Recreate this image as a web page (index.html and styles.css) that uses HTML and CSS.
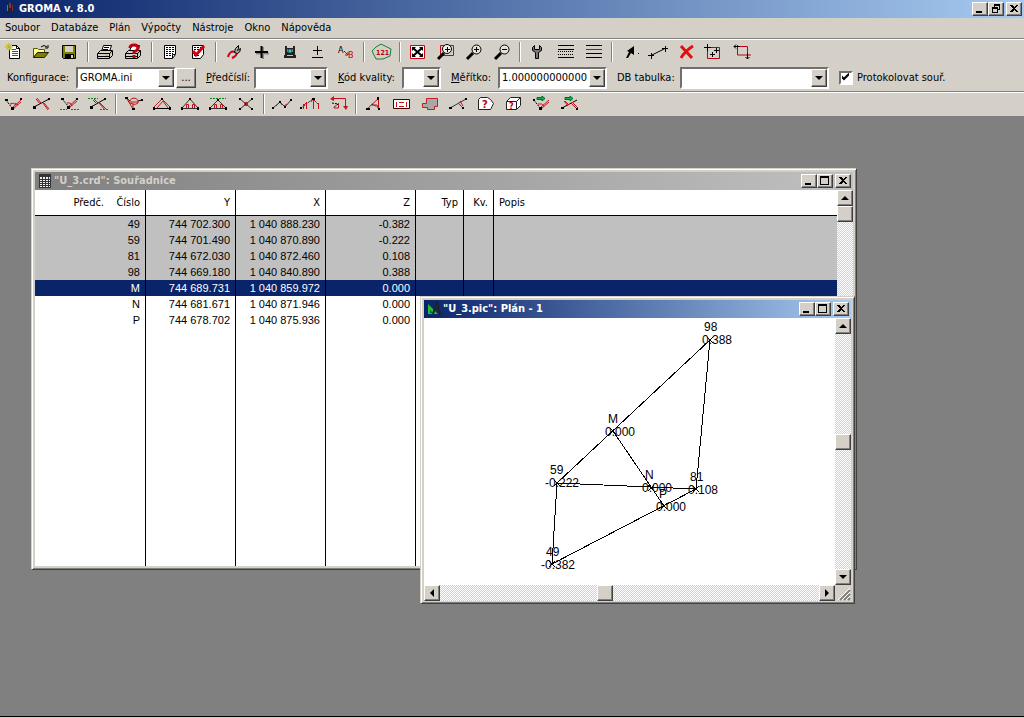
FILE: index.html
```html
<!DOCTYPE html>
<html lang="cs">
  <head>
    <meta charset="utf-8" />
    <meta name="viewport" content="width=device-width, initial-scale=1" />
    <title>GROMA v. 8.0</title>
    <link rel="stylesheet" href="styles.css">
  </head>
  <body>
    <header class="titlebar">
      <svg class="app-icon" viewBox="0 0 16 16"><path d="M5 2v9l2 3V3zM9 3v11l3-4V2z" fill="#222" /><path d="M7 2h2v5H7zM10 4h1v6h-1z" fill="#833" /><path d="M5 4h1v6H5z" fill="#777" /></svg>
      <h1>GROMA v. 8.0</h1>
      <div class="caption">
        <button aria-label="Minimalizovat"><svg viewBox="0 0 12 10"><path d="M2 7h6v2H2z" /></svg></button>
        <button aria-label="Obnovit"><svg viewBox="0 0 12 10"><path d="M4 0h6v6H8V5h1V2H5v1H4zM2 3h6v6H2zM3 5v3h4V5z" fill-rule="evenodd" /></svg></button>
        <button class="close" aria-label="Zavřít"><svg viewBox="0 0 12 10"><path d="M2 1h2l2 2 2-2h2L7 4.500l3 3.500H8L6 6 4 8H2l3-3.500z" /></svg></button>
      </div>
    </header>

    <nav class="menu">
      <button>Soubor</button>
      <button>Databáze</button>
      <button>Plán</button>
      <button>Výpočty</button>
      <button>Nástroje</button>
      <button>Okno</button>
      <button>Nápověda</button>
    </nav>

    <div class="toolbars">
      <div class="toolbar">
        <button aria-label="Nový"><svg viewBox="0 0 20 18"><path d="M5.500 15.500v-9M8 2.500h4.500l3 3v10h-10" fill="#fff" stroke="#000" /><path d="M6 7h9v8H6z" fill="#fff" /><path d="M12.500 2v3.500H16" fill="none" stroke="#000" /><path d="M8 6.500h4M8 8.500h6M8 10.500h6M8 12.500h6" stroke="#555" /><path d="M1 4h8M5 0v8M2 1l6 6M8 1L2 7" stroke="#b8b800" /></svg></button>
        <button aria-label="Otevřít"><svg viewBox="0 0 20 18"><path d="M1.500 14.500v-9h4l1 1h6v3h-7z" fill="#ffff90" stroke="#555500" /><path d="M1.500 14.500l4-5h11l-4 5z" fill="#808000" stroke="#222200" /><path d="M9 4q3-3 6 0M16 2v3h-3" fill="none" stroke="#000" /></svg></button>
        <button aria-label="Uložit"><svg viewBox="0 0 20 18"><path d="M2.500 2.500h13v13h-12l-1-1z" fill="#808000" stroke="#000" /><path d="M5 3h8v6H5z" fill="#d4d0c8" /><path d="M5 11h9v4H5z" /><path d="M11 12h2v3h-2z" fill="#d4d0c8" /></svg></button>
        <span class="sep"></span>
        <button aria-label="Tisk"><svg viewBox="0 0 20 18"><path d="M5.500 8.500l2-6h8l-2 6z" fill="#fff" stroke="#000" /><path d="M8 4.500h5M7 6.500h5" stroke="#000" /><path d="M1.500 10.500l3-3h12v5l-3 3h-12z" fill="#d4d0c8" stroke="#000" /><path d="M2 10.500h12l2-3M13.500 10v5M2 13.500h11" fill="none" stroke="#000" /><path d="M9 12h3" stroke="#bb0" /></svg></button>
        <button aria-label="Náhled tisku"><svg viewBox="0 0 20 18"><path d="M5.500 8.500l2-6h8l-2 6z" fill="#fff" stroke="#000" /><path d="M1.500 10.500l3-3h12v5l-3 3h-12z" fill="#d4d0c8" stroke="#000" /><path d="M2 10.500h12l2-3M13.500 10v5M2 13.500h11" fill="none" stroke="#000" /><path d="M6 5q0-3 4-3 4 0 4 3 0 2-4 4v2M10 12v3" fill="none" stroke="#c00010" stroke-width="3" /></svg></button>
        <span class="sep"></span>
        <button aria-label="Seznam"><svg viewBox="0 0 20 18"><path d="M4.500 2.500h11v9l-3 4h-8z" fill="#fff" stroke="#000" /><path d="M6 4.500h8M6 6.500h8M6 8.500h8M6 10.500h7M6 12.500h5" stroke="#000" stroke-dasharray="2 1" /><path d="M12.500 15v-3.500H15" fill="none" stroke="#000" /></svg></button>
        <button aria-label="Kontrola"><svg viewBox="0 0 20 18"><path d="M4.500 2.500h11v9l-3 4h-8z" fill="#fff" stroke="#000" /><path d="M6 4.500h8M6 6.500h8M6 12.500h5" stroke="#000" stroke-dasharray="2 1" /><path d="M5 8l3 4 8-9" fill="none" stroke="#d00010" stroke-width="3" /></svg></button>
        <span class="sep"></span>
        <button aria-label="Kleště"><svg viewBox="0 0 20 18"><path d="M11 9q-5-2-7 5M13 9q0 4-5 6" fill="none" stroke="#d00010" stroke-width="2" /><path d="M10.500 9.500l1-4 3-3v3l-1 2 3-2q0 4-3 5z" fill="#aaa" stroke="#000" /></svg></button>
        <button aria-label="Bod"><svg viewBox="0 0 20 18"><path d="M11 4v12M4 10.500h13" stroke="#888" stroke-width="2" /><path d="M9.500 3v12M3 9h13" stroke="#000" stroke-width="2" /></svg></button>
        <button aria-label="Přístroj"><svg viewBox="0 0 20 18"><path d="M5 3h2v6h6V3h2v9h1v3H4v-3h1zM7 5h6v1H7z" fill="#222" /><path d="M8 6h4v4H8z" fill="#20d8d8" stroke="#222" /><path d="M7 12h6v1H7z" fill="#b8c8c8" /></svg></button>
        <button aria-label="Plus minus"><svg viewBox="0 0 20 18"><path d="M9.500 3v9M5 7.500h9M4 14.500h11" stroke="#000" /></svg></button>
        <button aria-label="Transformace"><svg viewBox="0 0 20 18"><text x="2" y="10" class="glyph plain">A</text><text x="12" y="15" class="glyph plain red">B</text><path d="M8 8l4 4M12 9v3H9" fill="none" stroke="#c00010" /></svg></button>
        <span class="sep"></span>
        <button aria-label="Parcela"><svg viewBox="0 0 20 18"><path d="M0 8l4-4 5-3 10 5-1 7-7 3H4z" fill="none" stroke="#108030" /><text x="4" y="12" class="glyph small red">121</text></svg></button>
        <span class="sep"></span>
        <button aria-label="Zobrazit vše"><svg viewBox="0 0 20 18"><path d="M2.500 2.500h14v13h-14z" fill="#fff" stroke="#d00010" /><path d="M5 5l9 8M14 5l-9 8" stroke="#000" stroke-width="2" /><path d="M4 4h4L4 8zM15 4v4l-4-4zM4 14v-4l4 4zM15 14h-4l4-4z" /></svg></button>
        <button aria-label="Výřez"><svg viewBox="0 0 20 18"><path d="M4.500 2.500h13v10h-13z" fill="none" stroke="#d00010" /><circle cx="11" cy="6" r="4.500" fill="#eee" stroke="#000" /><path d="M9 6.500h5M11.500 4v5" stroke="#000" /><path d="M8 10l-6 6" stroke="#000" stroke-width="3" /></svg></button>
        <button aria-label="Zvětšit"><svg viewBox="0 0 20 18"><circle cx="12.500" cy="6.500" r="4.500" fill="#e4e0d8" stroke="#000" /><path d="M10 6.500h5M12.500 4v5" stroke="#000" /><path d="M9 10l-6 6" stroke="#000" stroke-width="3" /></svg></button>
        <button aria-label="Zmenšit"><svg viewBox="0 0 20 18"><circle cx="12.500" cy="6.500" r="4.500" fill="#e4e0d8" stroke="#000" /><path d="M10 6.500h5" stroke="#000" /><path d="M9 10l-6 6" stroke="#000" stroke-width="3" /></svg></button>
        <span class="sep"></span>
        <button aria-label="Nastavení"><svg viewBox="0 0 20 18"><path d="M6.500 2.500l-2 2v3l3 2v6h3v-6l3-2v-3l-2-2v4h-5z" fill="#777" stroke="#000" /></svg></button>
        <button aria-label="Typy čar"><svg viewBox="0 0 20 18" class="crisp"><path d="M2 2.500h16M2 6.500h16M2 14.500h16" stroke="#000" /><path d="M2 8.500h16M2 11.500h16" stroke="#000" stroke-dasharray="1 1" /></svg></button>
        <button aria-label="Barvy čar"><svg viewBox="0 0 20 18" class="crisp"><path d="M2 2.500h16M2 10.500h16M2 14.500h16" stroke="#000" /><path d="M2 6.500h16" stroke="#d00010" /></svg></button>
        <span class="sep"></span>
        <button aria-label="Výběr"><svg viewBox="0 0 20 18"><path d="M14 3v9l-3-2-3 5H6l3-6-2-1z" /><path d="M18 10h1v1h-1z" /></svg></button>
        <button aria-label="Linie"><svg viewBox="0 0 20 18"><path d="M3 12.500l14-7M0 12.500h6M3.500 10v6M14 5.500h6M17.500 3v6" stroke="#000" /></svg></button>
        <button aria-label="Smazat"><svg viewBox="0 0 20 18"><path d="M5 3l11 12M17 3Q9 8 5 15" fill="none" stroke="#e01010" stroke-width="3" /></svg></button>
        <button aria-label="Body v okně"><svg viewBox="0 0 20 18"><path d="M3.500 4.500h12v11h-12z" fill="none" stroke="#c00010" /><path d="M0 4.500h7M3.500 1v7M6 11.500h5M8.500 9v5M10 7.500h5M12.500 5v5" stroke="#000" /></svg></button>
        <button aria-label="Ořez"><svg viewBox="0 0 20 18"><path d="M5.500 2v10H19M2 3.500h13.500V16" fill="none" stroke="#c00010" /><path d="M2 3.500h6M2 3.500l2-2M2 3.500l2 2M15.500 10v6M15.500 16l-2-2M15.500 16l2-2" stroke="#000" /></svg></button>
      </div>

      <form class="settings">
        <div class="field">
          <label for="config">Konfi<u>g</u>urace:</label>
          <div class="combo combo-config">
            <select id="config"><option>GROMA.ini</option></select>
            <span class="arrow down"></span>
          </div>
          <button type="button" class="browse">...</button>
        </div>
        <div class="field">
          <label for="prefix"><u>P</u>ředčíslí:</label>
          <div class="combo combo-prefix">
            <select id="prefix"><option></option></select>
            <span class="arrow down"></span>
          </div>
        </div>
        <div class="field">
          <label for="quality"><u>K</u>ód kvality:</label>
          <div class="combo combo-quality">
            <select id="quality"><option></option></select>
            <span class="arrow down"></span>
          </div>
        </div>
        <div class="field">
          <label for="scale"><u>M</u>ěřítko:</label>
          <div class="combo combo-scale">
            <select id="scale"><option>1.000000000000</option></select>
            <span class="arrow down"></span>
          </div>
        </div>
        <div class="field">
          <label for="dbtable">DB tabulka:</label>
          <div class="combo combo-table">
            <select id="dbtable"><option></option></select>
            <span class="arrow down"></span>
          </div>
        </div>
        <div class="check">
          <input type="checkbox" id="log" checked />
          <label for="log">Protokolovat souř.</label>
        </div>
      </form>

      <div class="toolbar calc">
        <button aria-label="Polární metoda"><svg viewBox="0 0 20 18"><path d="M2 5l6 8" stroke="#000" stroke-dasharray="2 1" /><path d="M8 13l9-8M9 14l8-7M6 9q4-2 6 1M11 8l3 2" fill="none" stroke="#c81018" /><path d="M1 4h3v2H1zM7 12h3v3H7zM16 3h2v2h-2z" /></svg></button>
        <button aria-label="Ortogonální metoda"><svg viewBox="0 0 20 18"><path d="M2 12L17 4" stroke="#000" /><path d="M4 4l4 5M5 3l4 5M11 8l5 7M12 8l5 6" stroke="#c81018" /><path d="M1 11h3v3H1zM16 3h2v2h-2z" /></svg></button>
        <button aria-label="Polární dávkou"><svg viewBox="0 0 20 18"><path d="M2 4l7 8" stroke="#000" stroke-dasharray="2 1" /><path d="M8 12l9-8M9 13l8-7M7 8q4-1 5 3" fill="none" stroke="#c81018" /><path d="M1 3h3v2H1zM7 11h3v3H7zM16 3h2v2h-2z" /><path d="M0 14.500h7M11 14.500h8" stroke="#108010" stroke-dasharray="2 1" /></svg></button>
        <button aria-label="Ortogonální dávkou"><svg viewBox="0 0 20 18"><path d="M3 12L17 4" stroke="#000" /><path d="M5 5l4 4M6 4l4 4M11 8l6 7M12 8l6 6" stroke="#c81018" /><path d="M2 11h3v3H2zM16 3h2v2h-2z" /><path d="M0 3.500h10M12 14.500h8" stroke="#108010" stroke-dasharray="2 1" /></svg></button>
        <span class="sep"></span>
        <button aria-label="Volné stanovisko"><svg viewBox="0 0 20 18"><path d="M2 3l4 3M14 6l4-1" fill="none" stroke="#000" /><path d="M3 4l6 10V9M6 8q-1-4 4-5 5 1 4 5-2 2-5 1zM7 7h7" fill="none" stroke="#c81018" stroke-width="1" /><path d="M1 2h3v2H1zM17 4h2v2h-2zM8 13h3v2H8z" /></svg></button>
        <button aria-label="Protínání vpřed"><svg viewBox="0 0 20 18"><path d="M1 13.500h18" stroke="#000" /><path d="M1 13L10 4l9 9M5 13l6-7 5 7" fill="none" stroke="#c02020" /><path d="M1 12h2v3H1zM17 12h2v3h-2zM9 3h2v2H9z" /></svg></button>
        <button aria-label="Protínání z délek"><svg viewBox="0 0 20 18"><path d="M1 13.500h18M2 13l8-9 8 9" fill="none" stroke="#333" /><path d="M6.500 13V9.500h2V13M12.500 13V9.500h2V13" fill="none" stroke="#c81018" /><path d="M1 12h2v3H1zM17 12h2v3h-2zM9 3h2v2H9z" /></svg></button>
        <button aria-label="Protínání zpět"><svg viewBox="0 0 20 18"><path d="M1 13.500h18M2 13l8-8 8 8" fill="none" stroke="#333" /><path d="M6.500 13V9.500h2V13M12.500 13V9.500h2V13" fill="none" stroke="#c81018" /><path d="M1 12h2v3H1zM17 12h2v3h-2zM9 4h2v2H9z" /><path d="M2 3.500h16" stroke="#108010" stroke-dasharray="2 1" /></svg></button>
        <button aria-label="Průsečík"><svg viewBox="0 0 20 18"><path d="M4 4l12 10M16 4L4 14" stroke="#333" /><path d="M8.500 7.500h3v3h-3z" fill="none" stroke="#c02020" /><path d="M3 3h2v2H3zM15 3h2v2h-2zM3 13h2v2H3zM15 13h2v2h-2z" /></svg></button>
        <span class="sep"></span>
        <button aria-label="Polygonový pořad"><svg viewBox="0 0 20 18"><path d="M1 13l7-6 5 5 6-7" fill="none" stroke="#333" /><path d="M4 11l4-4 2 3M12 11l3-2" fill="none" stroke="#c81018" /><path d="M0 12h2v2H0zM7 6h2v2H7zM12 11h2v2h-2zM18 4h2v2h-2z" /></svg></button>
        <button aria-label="Síť"><svg viewBox="0 0 20 18"><path d="M1 13l12-9 6 6" fill="none" stroke="#222" stroke-dasharray="2 1" /><path d="M3.500 14V9M6.500 14V7M13.500 14V4M18.500 14V8M11 7l2-3 3 3M4 10l3-3" fill="none" stroke="#c81018" /><path d="M12 3h3v2h-3zM0 12h2v2H0z" /></svg></button>
        <button aria-label="Konstrukční oměrné"><svg viewBox="0 0 20 18"><path d="M4 3.500h13.500V12M10.500 8v5H6" fill="none" stroke="#c81018" /><path d="M6 1L2 4l4 2zM15 11h5l-2 4z" fill="#c81018" /><path d="M4 8l6 1-5 4" fill="none" stroke="#000" stroke-dasharray="2 1" /></svg></button>
        <span class="sep"></span>
        <button aria-label="Vytyčení"><svg viewBox="0 0 20 18"><path d="M3 14L15 3M7 10h6l2 3M14.500 5v8" fill="none" stroke="#c81018" /><path d="M8 9l7 4" stroke="#000" stroke-dasharray="1 1" /><path d="M2 13h4v2H2zM13 2h2v3h-2zM14 13h2v2h-2z" /></svg></button>
        <button aria-label="Výměra"><svg viewBox="0 0 20 18"><path d="M1.500 4.500h16v9h-16z" fill="#fff" stroke="#400" /><path d="M4.500 7v5M7 7.500h5M7 11.500h5M14.500 7v5" stroke="#c81018" /></svg></button>
        <button aria-label="Kresba parcely"><svg viewBox="0 0 20 18"><path d="M6.500 3.500h11v8h-3v3h-7v-2h-5v-4h4z" fill="#a8a8a8" stroke="#c02020" /></svg></button>
        <button aria-label="Směrník"><svg viewBox="0 0 20 18"><path d="M2 13L18 4" stroke="#333" /><path d="M10 8l5 5M12 6l3 5" stroke="#c81018" /><path d="M1 12h3v2H1zM17 3h2v2h-2zM14 12h2v2h-2z" /></svg></button>
        <button aria-label="Dotaz"><svg viewBox="0 0 20 18"><path d="M2.500 4.500l2-2h7l3 2 3 4-3 6h-12z" fill="#fff" stroke="#222" /><text x="6" y="13" class="glyph large red">?</text></svg></button>
        <button aria-label="Objem"><svg viewBox="0 0 20 18"><path d="M2.500 6.500l4-4h10v8l-4 4h-10zM3 6.500h9.500V14M12.500 6.500l4-4" fill="#fff" stroke="#222" /><text x="5" y="14" class="glyph red">?</text></svg></button>
        <button aria-label="Přepočet polární"><svg viewBox="0 0 20 18"><path d="M2 5l6 8" stroke="#000" stroke-dasharray="2 1" /><path d="M8 13l9-8M9 14l8-7M6 9q4-1 6 2" fill="none" stroke="#c81018" /><path d="M1 4h2v2H1zM7 12h3v3H7z" /><path d="M5 2.500h5V1l3 2.500L10 6V4.500H5z" fill="#20b040" stroke="#063" /></svg></button>
        <button aria-label="Přepočet ortogonální"><svg viewBox="0 0 20 18"><path d="M2 13L17 5" stroke="#000" /><path d="M4 6l4 5M5 6l4 4M11 8l6 6M12 7l6 6" stroke="#c81018" /><path d="M1 12h3v2H1zM16 13h2v2h-2z" /><path d="M5 2.500h5V1l3 2.500L10 6V4.500H5z" fill="#20b040" stroke="#063" /></svg></button>
      </div>
    </div>

    <main class="workspace">
      <section class="window coords">
        <div class="titlebar inactive">
          <svg class="app-icon crisp" viewBox="0 0 16 16"><path d="M2 1h12v14H2z" fill="#eee" /><path d="M2 1h12v3H2z" fill="#333" /><path d="M5.500 1v14M8.500 1v14M11.500 1v14M13.500 1v14M2.500 1v14M2 6.500h12M2 8.500h12M2 10.500h12M2 12.500h12M2 14.500h12" stroke="#333" /></svg>
          <h2>"U_3.crd": Souřadnice</h2>
          <div class="caption">
            <button aria-label="Minimalizovat"><svg viewBox="0 0 12 10"><path d="M2 7h6v2H2z" /></svg></button>
            <button aria-label="Maximalizovat"><svg viewBox="0 0 12 10"><path d="M1 0h9v9H1zM2 2v6h7V2z" fill-rule="evenodd" /></svg></button>
            <button class="close" aria-label="Zavřít"><svg viewBox="0 0 12 10"><path d="M2 1h2l2 2 2-2h2L7 4.500l3 3.500H8L6 6 4 8H2l3-3.500z" /></svg></button>
          </div>
        </div>
        <div class="coords-body">
          <table>
            <colgroup>
              <col class="col-prefix" />
              <col class="col-number" />
              <col class="col-coord" />
              <col class="col-coord" />
              <col class="col-coord" />
              <col class="col-type" />
              <col class="col-quality" />
              <col />
            </colgroup>
            <thead>
              <tr><th>Předč.</th><th>Číslo</th><th>Y</th><th>X</th><th>Z</th><th>Typ</th><th>Kv.</th><th>Popis</th></tr>
            </thead>
            <tbody>
              <tr class="fixed"><td></td><td>49</td><td>744 702.300</td><td>1 040 888.230</td><td>-0.382</td><td></td><td></td><td></td></tr>
              <tr class="fixed"><td></td><td>59</td><td>744 701.490</td><td>1 040 870.890</td><td>-0.222</td><td></td><td></td><td></td></tr>
              <tr class="fixed"><td></td><td>81</td><td>744 672.030</td><td>1 040 872.460</td><td>0.108</td><td></td><td></td><td></td></tr>
              <tr class="fixed"><td></td><td>98</td><td>744 669.180</td><td>1 040 840.890</td><td>0.388</td><td></td><td></td><td></td></tr>
              <tr class="selected"><td></td><td>M</td><td>744 689.731</td><td>1 040 859.972</td><td>0.000</td><td></td><td></td><td></td></tr>
              <tr><td></td><td>N</td><td>744 681.671</td><td>1 040 871.946</td><td>0.000</td><td></td><td></td><td></td></tr>
              <tr><td></td><td>P</td><td>744 678.702</td><td>1 040 875.936</td><td>0.000</td><td></td><td></td><td></td></tr>
              <tr class="rest"><td></td><td></td><td></td><td></td><td></td><td></td><td></td><td></td></tr>
            </tbody>
          </table>
          <div class="scroll vertical">
            <button class="arrow up" aria-label="Nahoru"></button>
            <span class="thumb"></span>
            <button class="arrow down" aria-label="Dolů"></button>
          </div>
        </div>
      </section>

      <section class="window plan">
        <div class="titlebar">
          <svg class="app-icon" viewBox="0 0 16 16"><path d="M2 3l10 10H2z" fill="#20c030" /><path d="M4 9l3 3H4z" fill="#063" /><path d="M11 1L7 13M11 1l3 14" stroke="#222" stroke-width="2" /></svg>
          <h2>"U_3.pic": Plán - 1</h2>
          <div class="caption">
            <button aria-label="Minimalizovat"><svg viewBox="0 0 12 10"><path d="M2 7h6v2H2z" /></svg></button>
            <button aria-label="Maximalizovat"><svg viewBox="0 0 12 10"><path d="M1 0h9v9H1zM2 2v6h7V2z" fill-rule="evenodd" /></svg></button>
            <button class="close" aria-label="Zavřít"><svg viewBox="0 0 12 10"><path d="M2 1h2l2 2 2-2h2L7 4.500l3 3.500H8L6 6 4 8H2l3-3.500z" /></svg></button>
          </div>
        </div>
        <div class="plan-body">
          <svg class="drawing" viewBox="0 0 411 267">
            <path class="lines" d="M133 165L286 22L272 171ZM133 165L128 246L272 171M189 113L240 188" />
            <path class="lines" d="M283 19l6 6m0-6l-6 6M186 110l6 6m0-6l-6 6M130 162l6 6m0-6l-6 6M269 168l6 6m0-6l-6 6M125 243l6 6m0-6l-6 6M224 167l6 6m0-6l-6 6M237 185l6 6m0-6l-6 6" />
            <text x="280" y="13">98</text><text x="278" y="26">0.388</text>
            <text x="184" y="105">M</text><text x="181" y="118">0.000</text>
            <text x="126" y="156">59</text><text x="121" y="169">-0.222</text>
            <text x="221" y="161">N</text><text x="218" y="174">0.000</text>
            <text x="266" y="163">81</text><text x="264" y="176">0.108</text>
            <text x="235" y="180">P</text><text x="232" y="193">0.000</text>
            <text x="122" y="238">49</text><text x="117" y="251">-0.382</text>
          </svg>
          <div class="scroll vertical">
            <button class="arrow up" aria-label="Nahoru"></button>
            <span class="thumb"></span>
            <button class="arrow down" aria-label="Dolů"></button>
          </div>
          <div class="scroll horizontal">
            <button class="arrow left" aria-label="Vlevo"></button>
            <span class="thumb"></span>
            <button class="arrow right" aria-label="Vpravo"></button>
          </div>
          <svg class="grip" viewBox="0 0 16 16"><path d="M5 15L15 5M9 15l6-6M13 15l2-2" stroke="#808080" stroke-width="2" /><path d="M3 15L15 3M7 15l8-8M11 15l4-4" stroke="#fff" /></svg>
        </div>
      </section>
    </main>
    <footer class="statusline"></footer>
  </body>
</html>
```

FILE: styles.css
```css
* {
  box-sizing: border-box;
}
body {
  margin: 0;
  height: 100vh;
  display: flex;
  flex-direction: column;
  overflow: hidden;
  background-color: #d4d0c8;
  color: #000;
  font-family: "DejaVu Sans Condensed", "DejaVu Sans", sans-serif;
  font-size: 11px;
  line-height: 16px;
}
button,
select,
input {
  margin: 0;
  padding: 0;
  font: inherit;
  color: inherit;
}
svg {
  display: block;
  overflow: visible;
}
.crisp {
  shape-rendering: crispEdges;
}

/* title bars */
.titlebar {
  display: flex;
  align-items: center;
  flex: none;
  height: 18px;
  padding: 0 2px;
  gap: 1px;
  background: linear-gradient(to right, #0a246a, #a6caf0);
  color: #fff;
}
.titlebar.inactive {
  background: linear-gradient(to right, #808080, #c0c0c0);
  color: #d4d0c8;
}
.titlebar h1,
.titlebar h2 {
  flex: 1;
  margin: 0;
  font-size: 11px;
  font-weight: bold;
  white-space: nowrap;
}
.app-icon {
  width: 16px;
  height: 16px;
}
.caption {
  display: flex;
}
.caption button {
  width: 16px;
  height: 14px;
}
.caption svg {
  width: 12px;
  height: 10px;
  shape-rendering: crispEdges;
}
.caption .close {
  margin-left: 2px;
}

/* raised controls */
.caption button,
.browse,
.arrow,
.thumb {
  display: flex;
  align-items: center;
  justify-content: center;
  border: 1px solid;
  border-color: #fff #404040 #404040 #fff;
  box-shadow: inset -1px -1px #808080;
  background-color: #d4d0c8;
  color: #000;
}
.arrow,
.thumb {
  flex: none;
  width: 16px;
  height: 16px;
}
.arrow::before {
  content: "";
  border: 4px solid transparent;
}
.arrow.up::before {
  border-top: 0;
  border-bottom-color: #000;
}
.arrow.down::before {
  border-bottom: 0;
  border-top-color: #000;
}
.arrow.left::before {
  border-left: 0;
  border-right-color: #000;
}
.arrow.right::before {
  border-right: 0;
  border-left-color: #000;
}

/* menu */
.menu {
  display: flex;
  flex: none;
  gap: 11px;
  height: 20px;
  padding: 0 5px;
  align-items: center;
}
.menu button {
  border: 0;
  background: none;
}

/* toolbars */
.toolbars {
  flex: none;
  border-top: 1px solid #808080;
  box-shadow: inset 0 1px #fff;
}
.toolbar {
  display: flex;
  height: 25px;
  align-items: center;
}
.toolbar button {
  display: flex;
  align-items: center;
  justify-content: center;
  width: 28px;
  height: 22px;
  border: 0;
  background: none;
}
.toolbar svg {
  width: 20px;
  height: 18px;
}
.sep {
  width: 2px;
  height: 20px;
  margin: 0 3px;
  background: linear-gradient(to right, #808080 50%, #fff 50%);
}
.calc {
  border-top: 1px solid #808080;
  box-shadow: inset 0 1px #fff;
}
.glyph {
  font-size: 9px;
  font-weight: bold;
}
.glyph.plain {
  font-weight: normal;
}
.glyph.small {
  font-size: 7px;
}
.glyph.large {
  font-size: 11px;
}
.glyph.red {
  fill: #c00010;
}

/* settings row */
.settings {
  display: grid;
  grid-template-columns: 189px 122px 103px 156px 212px auto;
  column-gap: 10px;
  height: 27px;
  padding-left: 7px;
  align-items: center;
  white-space: nowrap;
}
.field {
  display: flex;
  align-items: center;
}
.field label {
  flex: 1;
}
.combo {
  position: relative;
  height: 22px;
  border: 2px solid;
  border-color: #707070 #fff #fff #707070;
  background-color: #fff;
}
.combo select {
  width: 100%;
  height: 100%;
  padding-left: 2px;
  border: 0;
  background: none;
  appearance: none;
}
.combo .arrow {
  position: absolute;
  top: 0;
  right: 0;
  height: 18px;
  pointer-events: none;
}
.combo-config {
  width: 100px;
}
.combo-prefix {
  width: 74px;
}
.combo-quality {
  width: 39px;
}
.combo-scale {
  width: 109px;
}
.combo-table {
  width: 149px;
}
.browse {
  width: 20px;
  height: 20px;
}
.check {
  display: flex;
  align-items: center;
  gap: 4px;
}
.check input {
  appearance: none;
  width: 14px;
  height: 14px;
  border: 2px solid;
  border-color: #707070 #fff #fff #707070;
  background-color: #fff;
}
.check input:checked::before {
  content: "";
  display: block;
  width: 9px;
  height: 9px;
  background-color: #000;
  clip-path: polygon(11% 33%, 33% 55%, 89% 0, 89% 33%, 33% 89%, 11% 66%);
}

/* MDI area */
.workspace {
  position: relative;
  flex: 1;
  background-color: #808080;
}
.window {
  position: absolute;
  display: flex;
  flex-direction: column;
  padding: 3px;
  border: 1px solid;
  border-color: #d4d0c8 #404040 #404040 #d4d0c8;
  box-shadow: inset 1px 1px #fff, inset -1px -1px #808080;
  background-color: #d4d0c8;
}
.coords {
  left: 31px;
  top: 52px;
  width: 826px;
  height: 402px;
}
.plan {
  left: 420px;
  top: 180px;
  width: 435px;
  height: 308px;
}
.scroll {
  display: flex;
  background: repeating-conic-gradient(#fff 0 25%, #d4d0c8 0 50%) 0 0 / 2px 2px;
}
.vertical {
  flex-direction: column;
}
.vertical .arrow:last-child {
  margin-top: auto;
}
.horizontal .arrow:last-child {
  margin-left: auto;
}

/* coordinate list */
.coords-body {
  display: grid;
  grid-template-columns: 1fr 16px;
  flex: 1;
  background-color: #fff;
}
table {
  width: 100%;
  height: 100%;
  table-layout: fixed;
  border-collapse: separate;
  border-spacing: 0;
}
.col-prefix {
  width: 74px;
}
.col-number {
  width: 37px;
}
.col-coord {
  width: 90px;
}
.col-type {
  width: 48px;
}
.col-quality {
  width: 30px;
}
th,
td {
  height: 16px;
  padding: 0 5px 0 0;
  border-right: 1px solid #000;
  text-align: right;
  white-space: nowrap;
}
th {
  height: 26px;
  border-bottom: 1px solid #000;
  font-weight: normal;
}
td {
  font-family: "Liberation Sans", Arial, sans-serif;
}
th:first-child,
td:first-child,
th:last-child,
td:last-child {
  border-right: 0;
}
th:last-child {
  padding-left: 5px;
  text-align: left;
}
.fixed {
  background-color: #c0c0c0;
}
.selected {
  background-color: #0a246a;
  color: #fff;
}
.rest td {
  height: auto;
}

/* plan */
.plan-body {
  display: grid;
  grid-template-columns: 1fr 16px;
  grid-template-rows: 1fr 16px;
  flex: 1;
}
.drawing {
  width: 100%;
  height: 100%;
  background-color: #fff;
  font-family: "Liberation Sans", Arial, sans-serif;
  font-size: 12px;
}
.lines {
  fill: none;
  stroke: #000;
  shape-rendering: crispEdges;
}
.plan .vertical .thumb {
  margin-top: 100px;
}
.plan .horizontal .thumb {
  margin-left: 157px;
}
.statusline {
  flex: none;
  height: 2px;
  border-top: 1px solid #000;
}
```
